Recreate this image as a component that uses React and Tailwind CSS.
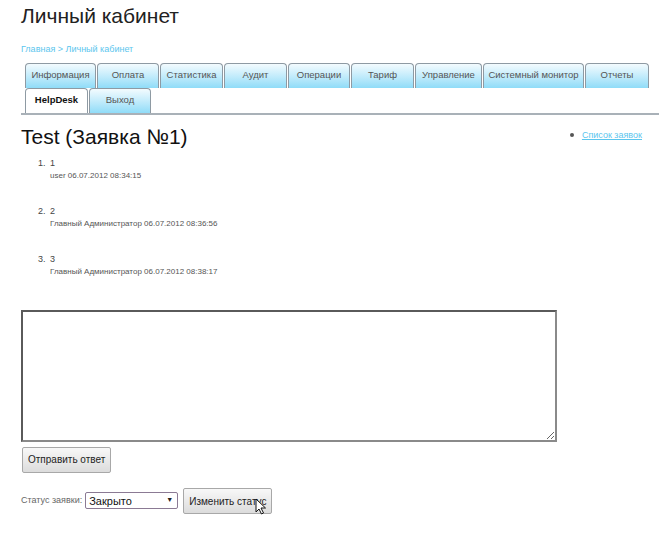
import { useState } from 'react';

const tabsTop = [
  { label: 'Информация', w: 'w-[71px]' },
  { label: 'Оплата', w: 'w-[62px]' },
  { label: 'Статистика', w: 'w-[63px]' },
  { label: 'Аудит', w: 'w-[63px]' },
  { label: 'Операции', w: 'w-[62px]' },
  { label: 'Тариф', w: 'w-[63px]' },
  { label: 'Управление', w: 'w-[67px]' },
  { label: 'Системный монитор', w: 'w-[101px]' },
  { label: 'Отчеты', w: 'w-[64px]' },
];

const messages = [
  { text: '1', author: 'user', date: '06.07.2012 08:34:15' },
  { text: '2', author: 'Главный Администратор', date: '06.07.2012 08:36:56' },
  { text: '3', author: 'Главный Администратор', date: '06.07.2012 08:38:17' },
];

function Tab({ label, w, active }) {
  return (
    <div
      className={
        'h-[25px] flex items-center justify-center border border-b-0 border-[#8e9aa3] rounded-t-[4px] text-[9.5px] whitespace-nowrap ' +
        w +
        (active ? ' bg-white font-bold text-[#111]' : ' bg-gradient-to-b from-[#f3fbfe] to-[#8fdcf8] text-[#555]')
      }
    >
      {label}
    </div>
  );
}

function GrayButton({ children, className = '' }) {
  return (
    <button className={'border border-[#a8a8a8] rounded-[2px] bg-gradient-to-b from-[#f8f8f8] to-[#dcdcdc] text-[10px] text-[#222] ' + className}>
      {children}
    </button>
  );
}

export default function App() {
  const [status, setStatus] = useState('closed');

  return (
    <div className="w-[659px] h-[550px] bg-white overflow-hidden font-['Liberation_Sans',Arial,sans-serif] text-[#222]">
      <div className="pl-[21px]">
        <h1 className="text-[21px] leading-[26px] pt-[3px] text-[#222]">Личный кабинет</h1>
        <div className="mt-[14px] text-[9px] text-[#5cc6ee]">
          <a href="#">Главная</a> &gt; <a href="#">Личный кабинет</a>
        </div>

        {/* Tabs */}
        <div className="mt-[6px] border-b-2 border-[#a9b1b8]">
          <div className="ml-[4px] flex gap-[1px]">
            {tabsTop.map((t) => (
              <Tab key={t.label} label={t.label} w={t.w} />
            ))}
          </div>
          <div className="ml-[4px] flex gap-[1px]">
            <Tab label="HelpDesk" w="w-[63px]" active />
            <Tab label="Выход" w="w-[62px]" />
          </div>
        </div>

        <div className="flex justify-between items-start mt-[9px] pr-[17px]">
          <h2 className="text-[21px] leading-[26px] text-[#111]">Test (Заявка №1)</h2>
          <ul className="mt-[5px] text-[9px]">
            <li className="flex items-center gap-[8px]">
              <span className="w-[4px] h-[4px] rounded-full bg-[#555]" />
              <a href="#" className="text-[#5cc6ee] underline">Список заявок</a>
            </li>
          </ul>
        </div>

        {/* Messages */}
        <ol className="mt-[6px] pl-[17px] text-[#444]">
          {messages.map((m, i) => (
            <li key={i} className="flex h-[48px]">
              <span className="w-[12px] text-[9px] leading-[14px]">{i + 1}.</span>
              <div>
                <div className="text-[9px] leading-[14px]">{m.text}</div>
                <div className="text-[8px] leading-[12px] text-[#555]">
                  {m.author} {m.date}
                </div>
              </div>
            </li>
          ))}
        </ol>

        <textarea className="block mt-[10px] w-[536px] h-[132px] border-2 border-t-[#5a5a5a] border-l-[#5a5a5a] border-r-[#8a8a8a] border-b-[#8a8a8a] bg-white resize" />

        <GrayButton className="mt-[5px] ml-[1px] h-[26px] px-[5px]">Отправить ответ</GrayButton>

        <div className="mt-[15px] flex items-center">
          <span className="text-[9px] text-[#666] mr-[3px]">Статус заявки:</span>
          <div className="relative w-[93px] h-[17px] border border-[#8b7a94] rounded-[2px] bg-white flex items-center">
            <select
              value={status}
              onChange={(e) => setStatus(e.target.value)}
              className="appearance-none w-full h-full pl-[3px] text-[11px] text-[#111] bg-transparent outline-none"
            >
              <option value="open">Открыто</option>
              <option value="closed">Закрыто</option>
            </select>
            <span className="absolute right-[4px] top-[2px] text-[7px] text-[#222] pointer-events-none">▼</span>
          </div>
          <div className="relative ml-[5px]">
            <GrayButton className="h-[26px] px-[5px]">Изменить статус</GrayButton>
            {/* mouse pointer */}
            <svg className="absolute left-[72px] top-[10px]" width="12" height="17" viewBox="0 0 12 17">
              <path d="M1 1 L1 14 L4 11 L6.5 16 L8.5 15 L6 10 L10.5 10 Z" fill="#fff" stroke="#111" strokeWidth="1" strokeLinejoin="round" />
            </svg>
          </div>
        </div>
      </div>
    </div>
  );
}
